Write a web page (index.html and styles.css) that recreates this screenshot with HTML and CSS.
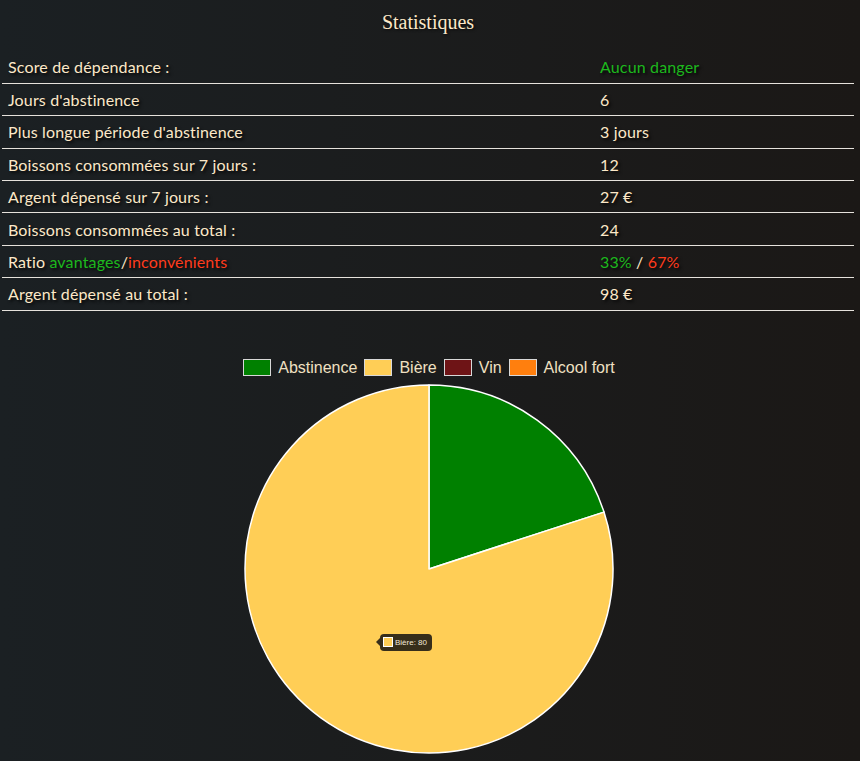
FILE: index.html
```html
<!DOCTYPE html>
<html lang="fr">
<head>
  <meta charset="UTF-8">
  <meta name="viewport" content="width=device-width, initial-scale=1.0">
  <title>Statistiques</title>
  <link rel="stylesheet" href="styles.css">
</head>
<body>

  <div class="container">
    <h1>Statistiques</h1>

    <table class="stats">
      <tbody>
        <tr>
          <td>Score de dépendance :</td>
          <td class="good">Aucun danger</td>
        </tr>
        <tr>
          <td>Jours d'abstinence</td>
          <td>6</td>
        </tr>
        <tr>
          <td>Plus longue période d'abstinence</td>
          <td>3 jours</td>
        </tr>
        <tr>
          <td>Boissons consommées sur 7 jours :</td>
          <td>12</td>
        </tr>
        <tr>
          <td>Argent dépensé sur 7 jours :</td>
          <td>27 €</td>
        </tr>
        <tr>
          <td>Boissons consommées au total :</td>
          <td>24</td>
        </tr>
        <tr>
          <td>Ratio <span class="good">avantages</span>/<span class="bad">inconvénients</span></td>
          <td><span class="good">33%</span> / <span class="bad">67%</span></td>
        </tr>
        <tr>
          <td>Argent dépensé au total :</td>
          <td>98 €</td>
        </tr>
      </tbody>
    </table>

    <div class="chart">
      <ul class="legend">
        <li><span class="swatch abstinence"></span>Abstinence</li>
        <li><span class="swatch biere"></span>Bière</li>
        <li><span class="swatch vin"></span>Vin</li>
        <li><span class="swatch fort"></span>Alcool fort</li>
      </ul>

      <div class="pie">
        <svg width="372" height="372" viewBox="0 0 372 372">
          <!-- Abstinence 20, Bière 80 -->
          <path d="M186 186 L186 2 A184 184 0 0 1 361 129.1 Z" fill="#008000" stroke="#fff" stroke-width="1.5" stroke-linejoin="round"/>
          <path d="M186 186 L361 129.1 A184 184 0 1 1 186 2 Z" fill="#ffce56" stroke="#fff" stroke-width="1.5" stroke-linejoin="round"/>
        </svg>
        <div class="tooltip"><span class="swatch biere small"></span>Bière: 80</div>
      </div>
    </div>
  </div>

</body>
</html>
```

FILE: styles.css
```css
* {
  margin: 0;
  padding: 0;
  box-sizing: border-box;
}

body {
  font-family: 'Lato', sans-serif;
  background: linear-gradient(to right, #1b2023, #1b1816);
  color: #fce8c8;
  min-height: 100vh;
  overflow: hidden;
}

.container {
  padding: 0 6px 0 2px;
}

h1 {
  font-family: 'Liberation Serif', serif;
  font-weight: normal;
  font-size: 20px;
  text-align: center;
  padding-top: 11px;
  height: 51px;
  text-shadow: 1px 1px 3px rgba(0, 0, 0, 0.7);
}

.stats {
  width: 100%;
  border-collapse: collapse;
}

.stats td {
  height: 32.4px;
  padding: 0 6px;
  font-size: 16px;
  letter-spacing: 0.15px;
  border-bottom: 1px solid #e6e2dc;
  text-shadow: 2px 2px 3px rgba(0, 0, 0, 0.8);
  vertical-align: middle;
}

.stats td:first-child {
  width: 592px;
}

.good {
  color: #1db81d;
}

.bad {
  color: #ff3b1c;
}

.chart {
  display: flex;
  flex-direction: column;
  align-items: center;
  padding-top: 46px;
  padding-left: 2px;
}

.legend {
  list-style: none;
  display: flex;
  gap: 7px;
  font-family: 'Liberation Sans', sans-serif;
  font-size: 16px;
  color: #f0e0c2;
  height: 22px;
  align-items: center;
}

.legend li {
  display: flex;
  align-items: center;
  gap: 7px;
}

.swatch {
  display: inline-block;
  width: 28px;
  height: 17px;
  border: 1px solid #d8d8d8;
}

.abstinence { background: #008000; }
.biere { background: #ffce56; }
.vin { background: #6e1416; }
.fort { background: #ff7f0e; }

.pie {
  position: relative;
  margin-top: 4px;
  width: 372px;
  height: 372px;
}

.pie svg {
  display: block;
}

.tooltip {
  position: absolute;
  left: 137px;
  top: 251px;
  height: 17px;
  display: flex;
  align-items: center;
  gap: 2px;
  padding: 0 5px 0 3px;
  background: rgba(20, 18, 16, 0.85);
  border-radius: 4px;
  font-family: 'Liberation Sans', sans-serif;
  font-size: 8px;
  color: #f2e8d8;
}

.tooltip::before {
  content: '';
  position: absolute;
  left: -4px;
  top: 4px;
  border-top: 4px solid transparent;
  border-bottom: 4px solid transparent;
  border-right: 4px solid rgba(20, 18, 16, 0.85);
}

.swatch.small {
  width: 10px;
  height: 10px;
  border: 1px solid #fff;
}
```
